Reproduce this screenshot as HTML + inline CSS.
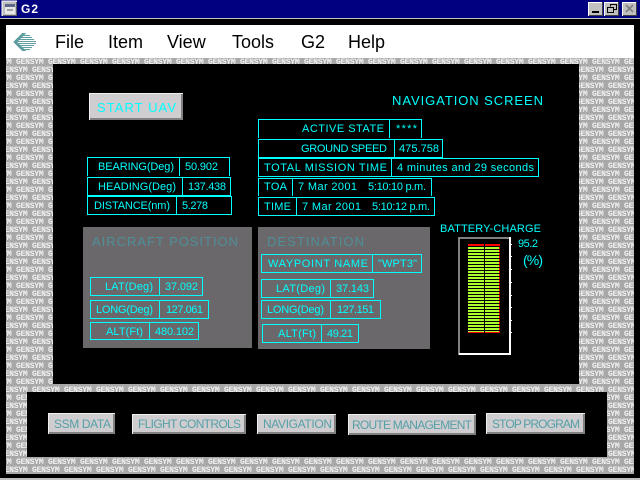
<!DOCTYPE html>
<html><head><meta charset="utf-8"><style>
html,body{margin:0;padding:0;background:#000;width:640px;height:480px;overflow:hidden}
svg{position:absolute;left:0;top:0;display:block}
.c{fill:#0ff;font-family:"Liberation Sans",sans-serif;font-size:11px}
.b{fill:none;stroke:#0ff;stroke-width:1}
.t{fill:#4f8f98;font-family:"Liberation Sans",sans-serif;font-size:13px}
.bt{fill:#55a0a8;font-family:"Liberation Sans",sans-serif;font-size:12px}
.m{fill:#000;font-family:"Liberation Sans",sans-serif;font-size:18px}
.p{fill:#f4f4f4;font-family:"Liberation Mono",monospace;font-weight:bold;font-size:8px;letter-spacing:-.229px}
</style></head><body>
<svg width="640" height="480" viewBox="0 0 640 480">
<rect width="640" height="480" fill="#000"/>
<rect width="640" height="18" fill="#000080"/>
<rect y="18" width="640" height="1" fill="#c0c0c0"/>
<rect x="2" y="1" width="15" height="15" fill="#c0c0c0"/>
<path d="M2 16V1H17" fill="none" stroke="#fff"/>
<path d="M3 15.500H16.500V2" fill="none" stroke="#606060"/>
<rect x="5" y="4" width="10" height="10" fill="#e8e8e8"/>
<rect x="5" y="4" width="10" height="3" fill="#606888"/>
<rect x="7" y="9" width="6" height="2" fill="#a0a0a0"/>
<text x="21" y="13" fill="#fff" font-family="Liberation Sans" font-weight="bold" font-size="12" letter-spacing="1">G2</text>
<g shape-rendering="crispEdges">
<rect x="588" y="2" width="15" height="14" fill="#c0c0c0"/><path d="M588.500 16V2.500H603" stroke="#fff" fill="none"/><path d="M589 15.500H602.500V2" stroke="#404040" fill="none"/>
<rect x="592" y="11" width="7" height="2" fill="#000"/>
<rect x="604" y="2" width="15" height="14" fill="#c0c0c0"/><path d="M604.500 16V2.500H619" stroke="#fff" fill="none"/><path d="M605 15.500H618.500V2" stroke="#404040" fill="none"/>
<path d="M610.500 6.500V4.500H616.500V9.500H614M607.500 7.500H613.500V12.500H607.500Z" stroke="#000" fill="none"/>
<rect x="622" y="2" width="15" height="14" fill="#c0c0c0"/><path d="M622.500 16V2.500H637" stroke="#fff" fill="none"/><path d="M623 15.500H636.500V2" stroke="#404040" fill="none"/>
</g>
<path d="M626 5L633 12M633 5L626 12" stroke="#808080" stroke-width="1.600"/>
<rect x="0" y="478" width="640" height="2" fill="#c0c0c0"/>
<rect x="6" y="58" width="628" height="416" fill="#a8a8a8"/>
<svg x="6" y="58" width="628" height="416" viewBox="6 58 628 416"><g class="p">
<text x="-16" y="64">GENSYM GENSYM GENSYM GENSYM GENSYM GENSYM GENSYM GENSYM GENSYM GENSYM GENSYM GENSYM GENSYM GENSYM GENSYM GENSYM GENSYM GENSYM GENSYM GENSYM GENSYM GENSYM</text>
<text x="-16" y="384">GENSYM GENSYM GENSYM</text>
<text x="0" y="392">GENSYM GENSYM GENSYM GENSYM GENSYM GENSYM GENSYM GENSYM GENSYM GENSYM GENSYM GENSYM GENSYM GENSYM GENSYM GENSYM GENSYM GENSYM GENSYM GENSYM GENSYM</text>
<text x="-16" y="464">GENSYM GENSYM GENSYM GENSYM GENSYM GENSYM GENSYM GENSYM GENSYM GENSYM GENSYM GENSYM GENSYM GENSYM GENSYM GENSYM GENSYM GENSYM GENSYM GENSYM GENSYM GENSYM</text>
<text x="0" y="472">GENSYM GENSYM GENSYM GENSYM GENSYM GENSYM GENSYM GENSYM GENSYM GENSYM GENSYM GENSYM GENSYM GENSYM GENSYM GENSYM GENSYM GENSYM GENSYM GENSYM GENSYM</text>
<text x="0" y="72">GENSYM GENSYM</text><text x="576" y="72">GENSYM GENSYM</text>
<text x="-16" y="80">GENSYM GENSYM GENSYM</text><text x="560" y="80">GENSYM GENSYM GENSYM</text>
<text x="0" y="88">GENSYM GENSYM</text><text x="576" y="88">GENSYM GENSYM</text>
<text x="-16" y="96">GENSYM GENSYM GENSYM</text><text x="560" y="96">GENSYM GENSYM GENSYM</text>
<text x="0" y="104">GENSYM GENSYM</text><text x="576" y="104">GENSYM GENSYM</text>
<text x="-16" y="112">GENSYM GENSYM GENSYM</text><text x="560" y="112">GENSYM GENSYM GENSYM</text>
<text x="0" y="120">GENSYM GENSYM</text><text x="576" y="120">GENSYM GENSYM</text>
<text x="-16" y="128">GENSYM GENSYM GENSYM</text><text x="560" y="128">GENSYM GENSYM GENSYM</text>
<text x="0" y="136">GENSYM GENSYM</text><text x="576" y="136">GENSYM GENSYM</text>
<text x="-16" y="144">GENSYM GENSYM GENSYM</text><text x="560" y="144">GENSYM GENSYM GENSYM</text>
<text x="0" y="152">GENSYM GENSYM</text><text x="576" y="152">GENSYM GENSYM</text>
<text x="-16" y="160">GENSYM GENSYM GENSYM</text><text x="560" y="160">GENSYM GENSYM GENSYM</text>
<text x="0" y="168">GENSYM GENSYM</text><text x="576" y="168">GENSYM GENSYM</text>
<text x="-16" y="176">GENSYM GENSYM GENSYM</text><text x="560" y="176">GENSYM GENSYM GENSYM</text>
<text x="0" y="184">GENSYM GENSYM</text><text x="576" y="184">GENSYM GENSYM</text>
<text x="-16" y="192">GENSYM GENSYM GENSYM</text><text x="560" y="192">GENSYM GENSYM GENSYM</text>
<text x="0" y="200">GENSYM GENSYM</text><text x="576" y="200">GENSYM GENSYM</text>
<text x="-16" y="208">GENSYM GENSYM GENSYM</text><text x="560" y="208">GENSYM GENSYM GENSYM</text>
<text x="0" y="216">GENSYM GENSYM</text><text x="576" y="216">GENSYM GENSYM</text>
<text x="-16" y="224">GENSYM GENSYM GENSYM</text><text x="560" y="224">GENSYM GENSYM GENSYM</text>
<text x="0" y="232">GENSYM GENSYM</text><text x="576" y="232">GENSYM GENSYM</text>
<text x="-16" y="240">GENSYM GENSYM GENSYM</text><text x="560" y="240">GENSYM GENSYM GENSYM</text>
<text x="0" y="248">GENSYM GENSYM</text><text x="576" y="248">GENSYM GENSYM</text>
<text x="-16" y="256">GENSYM GENSYM GENSYM</text><text x="560" y="256">GENSYM GENSYM GENSYM</text>
<text x="0" y="264">GENSYM GENSYM</text><text x="576" y="264">GENSYM GENSYM</text>
<text x="-16" y="272">GENSYM GENSYM GENSYM</text><text x="560" y="272">GENSYM GENSYM GENSYM</text>
<text x="0" y="280">GENSYM GENSYM</text><text x="576" y="280">GENSYM GENSYM</text>
<text x="-16" y="288">GENSYM GENSYM GENSYM</text><text x="560" y="288">GENSYM GENSYM GENSYM</text>
<text x="0" y="296">GENSYM GENSYM</text><text x="576" y="296">GENSYM GENSYM</text>
<text x="-16" y="304">GENSYM GENSYM GENSYM</text><text x="560" y="304">GENSYM GENSYM GENSYM</text>
<text x="0" y="312">GENSYM GENSYM</text><text x="576" y="312">GENSYM GENSYM</text>
<text x="-16" y="320">GENSYM GENSYM GENSYM</text><text x="560" y="320">GENSYM GENSYM GENSYM</text>
<text x="0" y="328">GENSYM GENSYM</text><text x="576" y="328">GENSYM GENSYM</text>
<text x="-16" y="336">GENSYM GENSYM GENSYM</text><text x="560" y="336">GENSYM GENSYM GENSYM</text>
<text x="0" y="344">GENSYM GENSYM</text><text x="576" y="344">GENSYM GENSYM</text>
<text x="-16" y="352">GENSYM GENSYM GENSYM</text><text x="560" y="352">GENSYM GENSYM GENSYM</text>
<text x="0" y="360">GENSYM GENSYM</text><text x="576" y="360">GENSYM GENSYM</text>
<text x="-16" y="368">GENSYM GENSYM GENSYM</text><text x="560" y="368">GENSYM GENSYM GENSYM</text>
<text x="0" y="376">GENSYM GENSYM</text><text x="576" y="376">GENSYM GENSYM</text>
<text x="560" y="384">GENSYM GENSYM GENSYM</text>
<text x="-16" y="400">GENSYM GENSYM</text><text x="592" y="400">GENSYM GENSYM</text>
<text x="0" y="408">GENSYM</text><text x="608" y="408">GENSYM</text>
<text x="-16" y="416">GENSYM GENSYM</text><text x="592" y="416">GENSYM GENSYM</text>
<text x="0" y="424">GENSYM</text><text x="608" y="424">GENSYM</text>
<text x="-16" y="432">GENSYM GENSYM</text><text x="592" y="432">GENSYM GENSYM</text>
<text x="0" y="440">GENSYM</text><text x="608" y="440">GENSYM</text>
<text x="-16" y="448">GENSYM GENSYM</text><text x="592" y="448">GENSYM GENSYM</text>
<text x="0" y="456">GENSYM</text><text x="608" y="456">GENSYM</text>
</g></svg>
<rect x="53" y="64" width="526" height="320" fill="#000"/>
<rect x="27" y="392" width="580" height="65" fill="#000"/>
<rect x="6" y="25" width="628" height="33" fill="#fff"/>
<g fill="#5f9ea0" shape-rendering="crispEdges">
<path d="M13 42L22 33H26L17 42L26 51H22Z"/>
<rect x="22" y="35" width="8" height="1"/><rect x="20" y="37" width="12" height="1"/><rect x="18" y="39" width="16" height="1"/><rect x="16" y="41" width="20" height="1"/><rect x="16" y="43" width="20" height="1"/><rect x="18" y="45" width="16" height="1"/><rect x="20" y="47" width="12" height="1"/><rect x="22" y="49" width="8" height="1"/>
</g>
<g class="m">
<text x="55" y="48">File</text>
<text x="108" y="48">Item</text>
<text x="167" y="48">View</text>
<text x="232" y="48">Tools</text>
<text x="301" y="48">G2</text>
<text x="348" y="48">Help</text>
</g>
<g shape-rendering="crispEdges">
<rect x="89" y="93" width="94" height="27" fill="#cfcdcf"/><path d="M89.500 120V93.500H183" stroke="#f0f0f0" fill="none"/>
<path d="M90 118H181V94H183V120H90Z" fill="#808080"/>
<rect x="83" y="227" width="169" height="121" fill="#6b686b"/>
<rect x="258" y="227" width="172" height="122" fill="#6b686b"/>
</g>
<g class="c">
<text x="97" y="112" style="font-size:13px" textLength="79">START UAV</text>
<text x="392" y="105" style="font-size:13px" textLength="151">NAVIGATION SCREEN</text>
</g>
<g class="t">
<text x="92" y="246" textLength="146">AIRCRAFT POSITION</text>
<text x="267" y="246" textLength="97">DESTINATION</text>
</g>
<g class="b" shape-rendering="crispEdges">
<path d="M87.500 176V157.500H229.500V176M179.500 157V176"/>
<rect x="87.500" y="177.500" width="143" height="18"/><path d="M182.500 177V196"/>
<rect x="87.500" y="196.500" width="144" height="18"/><path d="M176.500 196V215"/>
<path d="M258.500 138V119.500H421.500V138M389.500 119V138"/>
<rect x="258.500" y="139.500" width="184" height="18"/><path d="M394.500 139V158"/>
<rect x="258.500" y="158.500" width="280" height="18"/><path d="M391.500 158V177"/>
<path d="M258.500 196V178.500H431.500V196M292.500 178V196"/>
<rect x="258.500" y="197.500" width="176" height="18"/><path d="M296.500 197V216"/>
<rect x="90.500" y="277.500" width="112" height="18"/><path d="M159.500 277V296"/>
<rect x="90.500" y="300.500" width="118" height="18"/><path d="M159.500 300V319"/>
<rect x="90.500" y="322.500" width="108" height="17"/><path d="M149.500 322V340"/>
<rect x="261.500" y="254.500" width="160" height="18"/><path d="M372.500 254V273"/>
<rect x="261.500" y="279.500" width="112" height="18"/><path d="M330.500 279V298"/>
<rect x="261.500" y="300.500" width="119" height="18"/><path d="M330.500 300V319"/>
<rect x="262.500" y="324.500" width="96" height="18"/><path d="M321.500 324V343"/>
</g>
<g class="c">
<text x="98" y="170" textLength="76">BEARING(Deg)</text><text x="185" y="170" textLength="33">50.902</text>
<text x="98" y="190" textLength="78">HEADING(Deg)</text><text x="188" y="190" textLength="38">137.438</text>
<text x="94" y="209" textLength="76">DISTANCE(nm)</text><text x="182" y="209" textLength="26">5.278</text>
<text x="302" y="132" textLength="82">ACTIVE STATE</text><text x="396" y="132" textLength="21">****</text>
<text x="301" y="152" textLength="86">GROUND SPEED</text><text x="399" y="152" textLength="40">475.758</text>
<text x="264" y="171" textLength="123">TOTAL MISSION TIME</text><text x="397" y="171" textLength="137">4 minutes and 29 seconds</text>
<text x="264" y="190" textLength="23">TOA</text><text x="298" y="190" textLength="59">7 Mar 2001</text><text x="368" y="190" textLength="58">5:10:10 p.m.</text>
<text x="264" y="210" textLength="27">TIME</text><text x="302" y="210" textLength="59">7 Mar 2001</text><text x="372" y="210" textLength="58">5:10:12 p.m.</text>
<text x="105" y="290" textLength="48">LAT(Deg)</text><text x="165" y="290" textLength="33">37.092</text>
<text x="96" y="313" textLength="57">LONG(Deg)</text><text x="166" y="313" textLength="37">127.061</text>
<text x="106" y="335" textLength="37">ALT(Ft)</text><text x="155" y="335" textLength="39">480.102</text>
<text x="268" y="267" textLength="100">WAYPOINT NAME</text><text x="378" y="267" textLength="39">"WPT3"</text>
<text x="276" y="292" textLength="49">LAT(Deg)</text><text x="336" y="292" textLength="33">37.143</text>
<text x="267" y="313" textLength="57">LONG(Deg)</text><text x="337" y="313" textLength="37">127.151</text>
<text x="278" y="337" textLength="38">ALT(Ft)</text><text x="327" y="337" textLength="26">49.21</text>
<text x="440" y="232" textLength="101">BATTERY-CHARGE</text>
<text x="518" y="247" textLength="20">95.2</text>
<text x="523" y="265" style="font-size:14px" textLength="20">(%)</text>
</g>
<g shape-rendering="crispEdges">
<rect x="458" y="237" width="2" height="118" fill="#808080"/><rect x="458" y="237" width="53" height="2" fill="#808080"/>
<rect x="509" y="237" width="2" height="118" fill="#fff"/><rect x="459" y="353" width="52" height="2" fill="#fff"/>
<path d="M511 244.500h1M511 256.500h1M511 269.500h1M511 282.500h1M511 295.500h1M511 307.500h1M511 320.500h1M511 332.500h1" stroke="#fff"/>
<rect x="468" y="244" width="32" height="2" fill="#f00"/>
<rect x="468" y="247" width="32" height="86" fill="#adff2f"/>
<rect x="499" y="247" width="1" height="86" fill="#f00"/>
<path d="M468 249.500h32M468 252.500h32M468 255.500h32M468 258.500h32M468 261.500h32M468 264.500h32M468 267.500h32M468 270.500h32M468 273.500h32M468 276.500h32M468 279.500h32M468 282.500h32M468 285.500h32M468 288.500h32M468 291.500h32M468 294.500h32M468 297.500h32M468 300.500h32M468 303.500h32M468 306.500h32M468 309.500h32M468 312.500h32M468 315.500h32M468 318.500h32M468 321.500h32M468 324.500h32M468 327.500h32M468 330.500h32" stroke="#000"/>
<rect x="468" y="332" width="32" height="1" fill="#f00"/>
<rect x="484" y="244" width="1" height="89" fill="#000"/>
<g fill="#cfcdcf">
<rect x="48" y="413" width="67" height="21"/><rect x="132" y="414" width="114" height="20"/><rect x="257" y="414" width="79" height="20"/><rect x="348" y="414" width="128" height="21"/><rect x="486" y="413" width="99" height="21"/>
</g>
<g fill="#f0f0f0">
<path d="M48 413h67v1h-66v20h-1z"/><path d="M132 414h114v1h-113v19h-1z"/><path d="M257 414h79v1h-78v19h-1z"/><path d="M348 414h128v1h-127v20h-1z"/><path d="M486 413h99v1h-98v20h-1z"/>
</g>
<g fill="#808080">
<path d="M49 432h64v-18h2v20h-66z"/><path d="M133 432h111v-17h2v19h-113z"/><path d="M258 432h76v-17h2v19h-78z"/><path d="M349 433h125v-18h2v20h-127z"/><path d="M487 432h96v-18h2v20h-98z"/>
</g>
</g>
<g class="bt">
<text x="54" y="428" textLength="57">SSM DATA</text>
<text x="138" y="428" textLength="103">FLIGHT CONTROLS</text>
<text x="263" y="428" textLength="69">NAVIGATION</text>
<text x="352" y="429" textLength="120">ROUTE MANAGEMENT</text>
<text x="492" y="428" textLength="88">STOP PROGRAM</text>
</g>
</svg>
</body></html>
